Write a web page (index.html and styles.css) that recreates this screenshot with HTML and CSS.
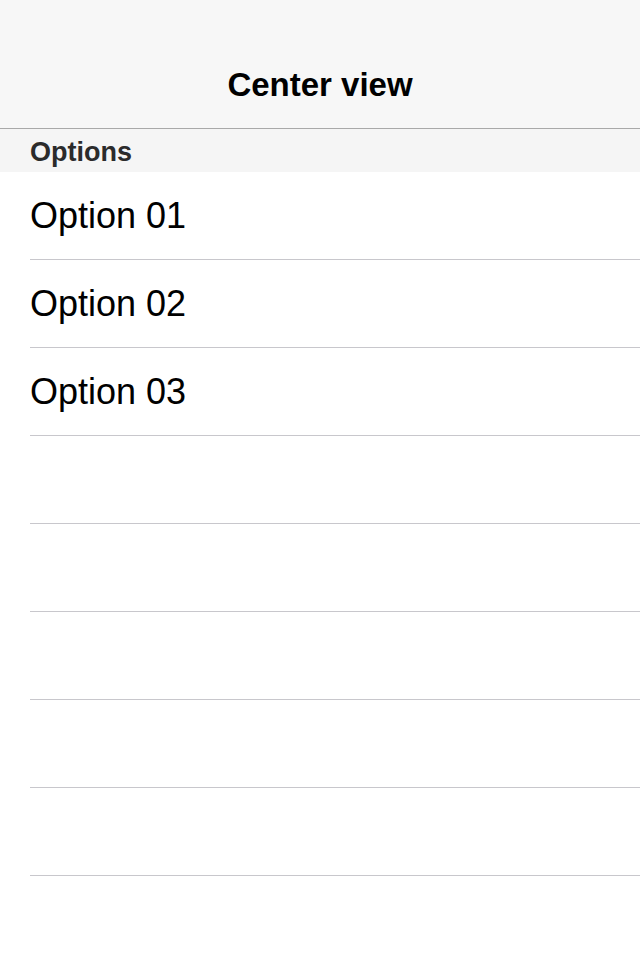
FILE: index.html
```html
<!DOCTYPE html>
<html>
<head>
<meta charset="utf-8">
<link rel="stylesheet" href="styles.css">
</head>
<body>
<div class="nav">
  <div class="status"></div>
  <div class="bar"><span class="title">Center view</span></div>
</div>
<div class="section">Options</div>
<ul class="list">
  <li class="row">Option 01</li>
  <li class="row">Option 02</li>
  <li class="row">Option 03</li>
  <li class="row"></li>
  <li class="row"></li>
  <li class="row"></li>
  <li class="row"></li>
  <li class="row"></li>
</ul>
</body>
</html>
```
FILE: styles.css
```css
html, body {
  margin: 0;
  padding: 0;
  background: #ffffff;
  font-family: "Liberation Sans", Arial, sans-serif;
}
.nav {
  background: #f7f7f7;
  border-bottom: 1px solid #a9a9a9;
}
.status {
  height: 41px;
}
.bar {
  height: 87px;
  display: flex;
  align-items: center;
  justify-content: center;
}
.title {
  font-size: 33px;
  font-weight: bold;
  color: #000;
}
.section {
  height: 40px;
  padding-top: 3px;
  background: #f5f5f5;
  display: flex;
  align-items: center;
  padding-left: 30px;
  font-size: 27px;
  font-weight: bold;
  color: #2b2b2b;
}
.list {
  list-style: none;
  margin: 0;
  padding: 0 0 0 30px;
}
.row {
  height: 87px;
  border-bottom: 1px solid #c8c7cc;
  display: flex;
  align-items: center;
  font-size: 36px;
  color: #000;
}
```
